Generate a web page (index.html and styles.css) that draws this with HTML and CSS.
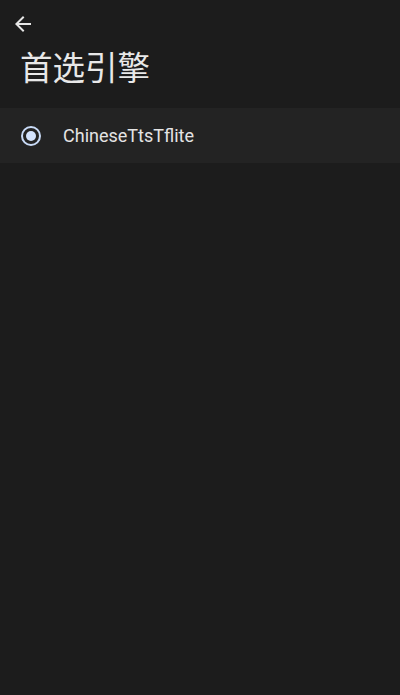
FILE: index.html
```html
<!DOCTYPE html>
<html lang="zh">
<head>
<meta charset="utf-8">
<link rel="stylesheet" href="styles.css">
</head>
<body>
<div class="app">
  <header class="toolbar">
    <button class="back" aria-label="返回">
      <svg width="24" height="24" viewBox="0 0 24 24"><path d="M20 11H7.83l5.59-5.59L12 4l-8 8 8 8 1.41-1.41L7.83 13H20v-2z" fill="#e6e6e6"/></svg>
    </button>
  </header>
  <h1 class="title">首选引擎</h1>
  <ul class="list">
    <li class="row">
      <span class="radio"><span class="dot"></span></span>
      <span class="label">ChineseTtsTflite</span>
    </li>
  </ul>
</div>
</body>
</html>
```
FILE: styles.css
```css
html, body {
  margin: 0;
  padding: 0;
  background: #1c1c1c;
  height: 100%;
}
.app {
  font-family: Roboto, "Noto Sans CJK SC", sans-serif;
  color: #e6e6e6;
}
.toolbar {
  height: 48px;
  display: flex;
  align-items: center;
  padding-left: 11px;
}
.back {
  background: none;
  border: 0;
  padding: 0;
  width: 24px;
  height: 24px;
  display: flex;
}
.title {
  margin: 0;
  padding: 0 0 0 20px;
  font-family: "Noto Sans CJK SC", sans-serif;
  font-weight: 400;
  font-size: 32.5px;
  line-height: 40px;
  height: 40px;
  margin-top: -2px;
  color: #e8e8e8;
}
.list {
  list-style: none;
  margin: 22px 0 0 0;
  padding: 0;
}
.row {
  height: 55px;
  background: #232323;
  display: flex;
  align-items: center;
  padding-left: 21px;
}
.radio {
  width: 20px;
  height: 20px;
  box-sizing: border-box;
  border: 2px solid #c9dbf7;
  border-radius: 50%;
  display: flex;
  align-items: center;
  justify-content: center;
}
.dot {
  width: 10px;
  height: 10px;
  border-radius: 50%;
  background: #d3e3fd;
}
.label {
  margin-left: 22px;
  font-size: 18px;
  color: #e4e4e4;
}
```
